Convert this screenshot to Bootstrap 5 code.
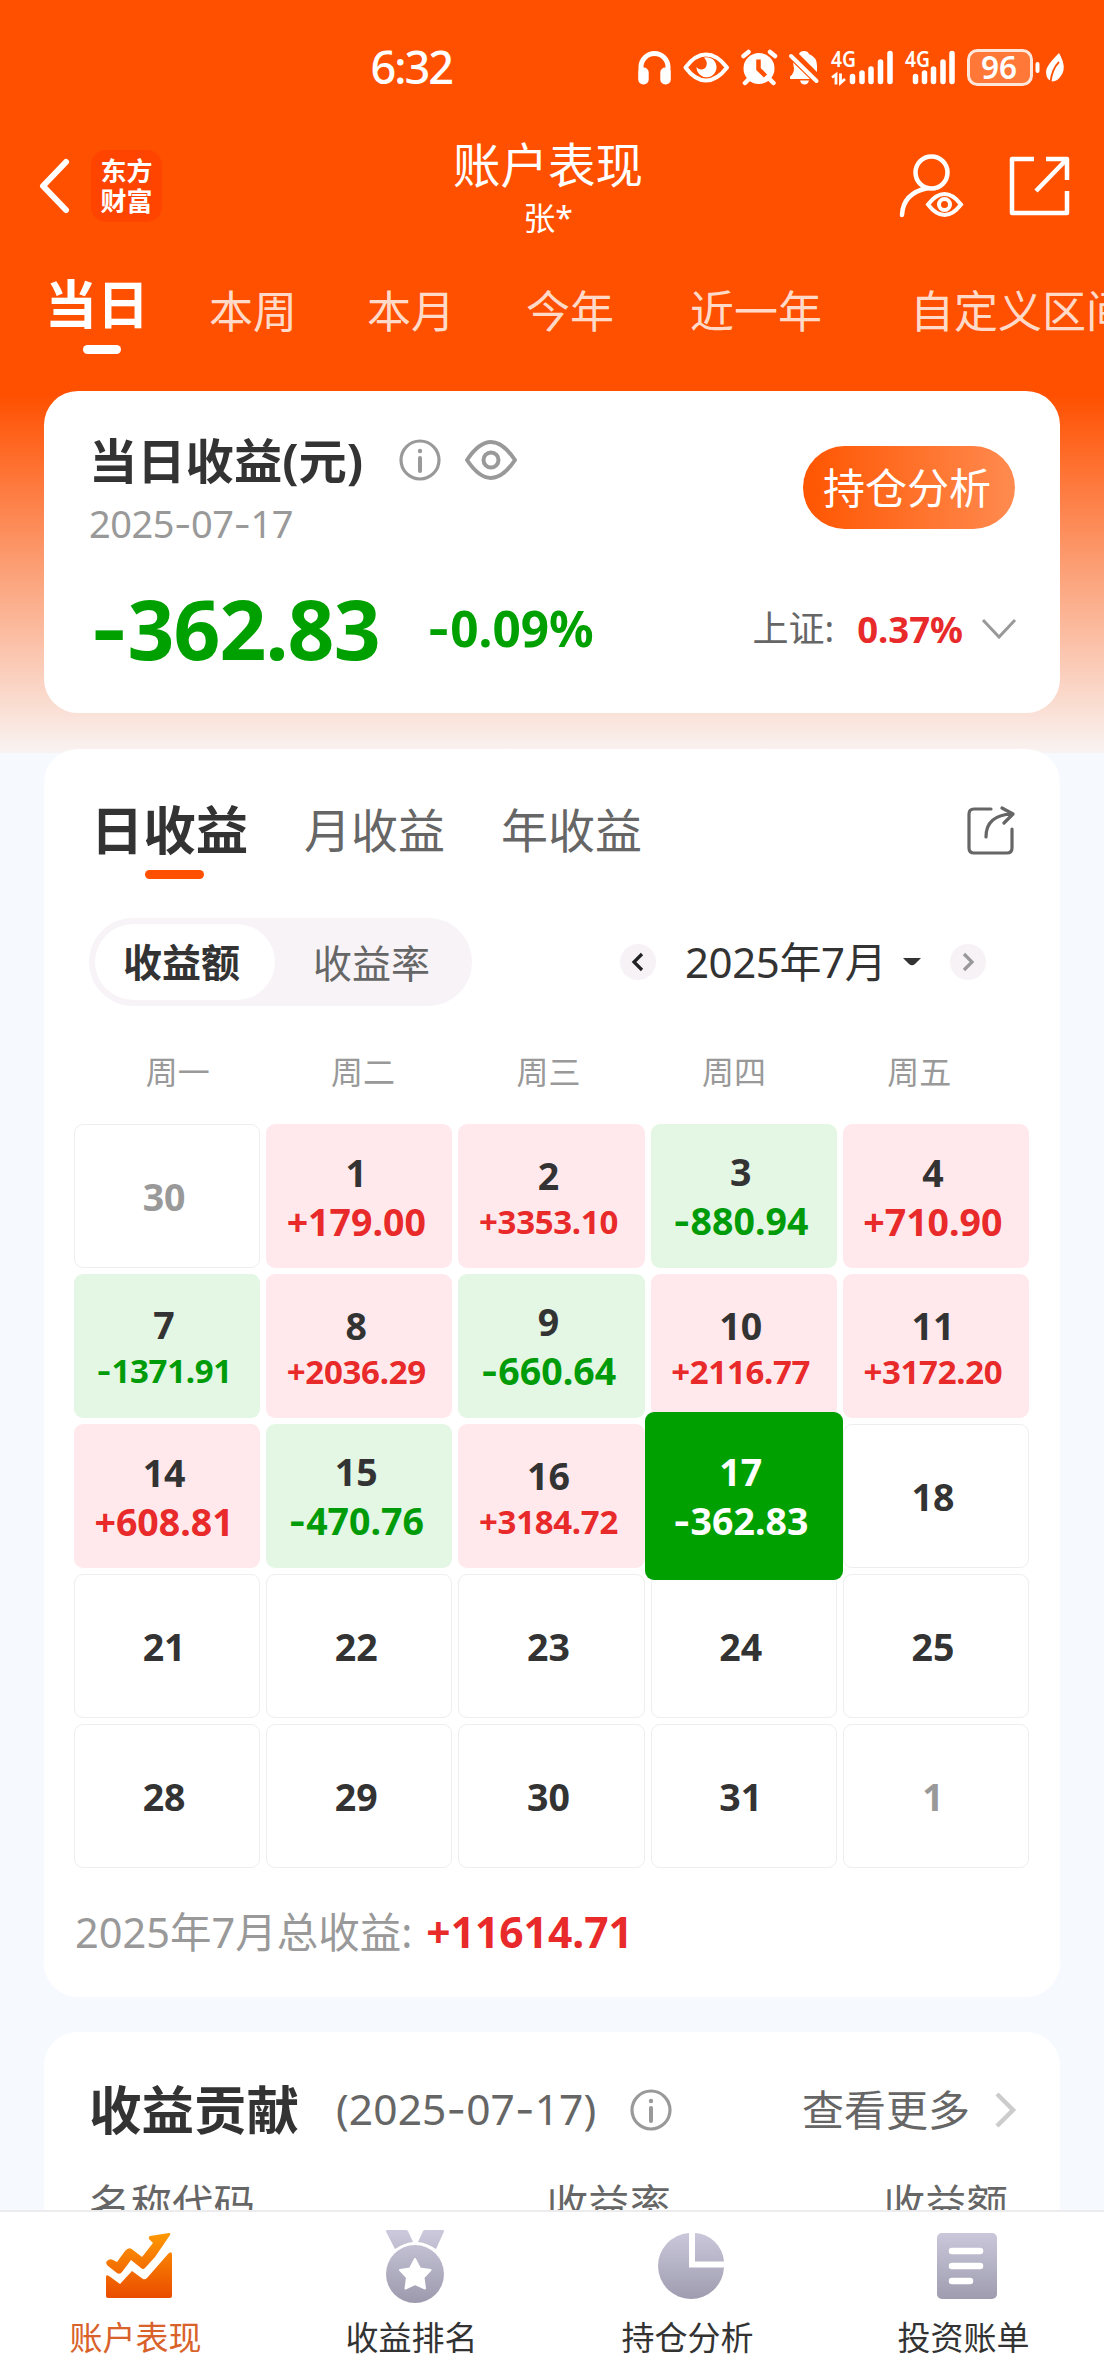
<!DOCTYPE html>
<html lang="zh-CN">
<head>
<meta charset="utf-8">
<meta name="viewport" content="width=device-width, initial-scale=1">
<title>账户表现</title>
<link href="https://cdn.jsdelivr.net/npm/bootstrap@5.3.0/dist/css/bootstrap.min.css" rel="stylesheet">
<style>
  body{width:1104px;height:2376px;overflow:hidden;background:#f6faff;color:#333;font-family:"Noto Sans","Noto Sans CJK SC",sans-serif;line-height:1;white-space:nowrap}
  svg{display:block;flex:none}
  b{font-weight:700}
  .hy{font-style:normal;font-family:Inter,"Noto Sans",sans-serif}
  .screen{height:2210px;background:linear-gradient(#ff5000 0,#ff5000 395px,#f9f3f2 753px,#f6faff 753px)}
  .status{height:136px;padding:0 36px 0 370.5px}
  .clock{font-size:45px;font-weight:500;letter-spacing:-2px;padding-bottom:3px}
  .topbar{height:118px;padding:0 32px 0 38px;display:grid;grid-template-columns:1fr auto 1fr;align-items:start}
  .brand{width:71px;height:72px;border-radius:15px;background:#ff4400;font-size:26px;line-height:30px;font-weight:700;margin-left:19px;padding-top:6px}
  .title{font-size:47.5px;line-height:58px}
  .who{font-size:32px;line-height:48px}
  .periods{height:137px;color:#ffdac8;font-size:44px;line-height:60px;padding-left:45px}
  .periods .now{color:#fff;font-size:52px;font-weight:700}
  .bar{height:9px;border-radius:5px}
  .panel{background:#fff;border-radius:34px;margin:0 44px}
  .summary{height:322px;padding:0 45px 0 46px}
  .grey6{color:#666}.grey9{color:#999}
  .gain{color:#e82a2a}.loss{color:#00a000}
  .btn-hold{width:212px;height:83px;border-radius:42px;background:linear-gradient(90deg,#ff5500,#ff8b50);color:#fff;font-size:42px;line-height:83px;padding:0 4px 0 0;border:0}
  .calendar{height:1248px;margin-top:36px;padding-top:46px}
  .kinds{height:123px;padding:0 45px 0 47px;font-size:47px;line-height:70px}
  .kinds .now{font-size:52.5px;font-weight:700;color:#333}
  .seg{width:383px;height:88px;border-radius:44px;background:#f7f3f7;padding:6px;font-size:39px}
  .seg .on{width:180px;height:76px;border-radius:38px;background:#fff;font-weight:700}
  .dot{width:36px;height:36px;border-radius:50%;background:#f7f2f6}
  .week{height:118px;padding:28px 48px 0 41px;font-size:32px;line-height:76px}
  .days{display:grid;grid-template-columns:repeat(5,1fr);grid-auto-rows:144px;gap:6px;width:955px;margin-left:30px}
  .day{border-radius:9px;display:flex;flex-direction:column;align-items:center;justify-content:center;padding:1px 6px 0 0;font-weight:700;font-size:37.5px;line-height:50px;border:1.5px solid #eee;background:#fff}
  .day.up,.day.dn{border:0}
  .day.up{background:#ffe9ec}.day.up b{color:#e82a2a}
  .day.dn{background:#e4f6e4}.day.dn b{color:#009b08}
  .day b{line-height:48px}
  .day.long{line-height:47px;padding-top:3px}
  .day.long b{font-size:33px;line-height:45px;letter-spacing:-.3px}
  .day.sel{background:#00a000;color:#fff;margin:-12px -6px;z-index:1}
  .day.sel b{color:#fff}
  .total{height:129px;padding-left:31px;font-size:41.5px}
  .contrib{margin-top:35px;height:178px;border-radius:34px 34px 0 0;overflow:hidden}
  .heads{font-size:41.5px;line-height:60px}
  .tabs{height:166px;background:#fff;border-top:2px solid #ececee;font-size:33px}
  .tabs a{color:#333;text-decoration:none}
  .tabs a span{margin-right:5px;line-height:44px}
  .tabs a.here{color:#d9622b}
  .tabs svg{margin:16px 0 10px 2px}
</style>
</head>
<body>
<div class="screen overflow-hidden">
  <div class="status d-flex align-items-center justify-content-between text-white">
    <span class="clock">6:32</span>
    <svg width="430" height="40" viewBox="638 48 430 40" fill="#fff">
      <path d="M641 72V67a13.500 13.500 0 0 1 27 0V72" fill="none" stroke="#fff" stroke-width="5"/>
      <rect x="638.200" y="67.500" width="10.500" height="17" rx="5"/><rect x="660.300" y="67.500" width="10.500" height="17" rx="5"/>
      <path d="M685.500 67.500Q695 54.500 706 54.500T727 67.500Q717 80.500 706 80.500T685.500 67.500Z" fill="none" stroke="#fff" stroke-width="4" stroke-linejoin="round"/>
      <path d="M704 57.500a10 10 0 1 1-7.500 9.500c3 4 9 3 10-1.500 1-3-.5-6-2.500-8z"/>
      <circle cx="759" cy="68.500" r="15.500"/>
      <path d="M743.500 56l5-4M775 56l-5-4M749 79l-4 4M769.500 79l4 4" stroke="#fff" stroke-width="4.500" stroke-linecap="round"/>
      <path d="M758.500 59.500v9.500l7 7" fill="none" stroke="#ff5000" stroke-width="4.500"/>
      <path d="M799 54q1-3 5-3t5 3q8 3 8 12v6zM793 62.500L810 79H790v-2.500q4-3 4-8zM800 80.500h9q-1 4-4.500 4T800 80.500z"/>
      <path d="M791 56L816.500 81" stroke="#fff" stroke-width="4" stroke-linecap="round"/>
      <text x="831" y="66.500" font-size="22" font-weight="600" textLength="25" lengthAdjust="spacingAndGlyphs">4G</text>
      <path d="M832 77.500l4-3V84.500M840.500 73.500V83l4.500-4" fill="none" stroke="#fff" stroke-width="2.800"/>
      <path d="M852.500 76.500v5M862 73v8.500M871 69v12.500M880.500 62v19.500M890 53.500v28" stroke="#fff" stroke-width="5.500" stroke-linecap="round"/>
      <text x="905" y="66.500" font-size="22" font-weight="600" textLength="25" lengthAdjust="spacingAndGlyphs">4G</text>
      <path d="M915.500 76.500v5M924.500 73v8.500M933.500 69v12.500M943 62v19.500M952 53.500v28" stroke="#fff" stroke-width="5.500" stroke-linecap="round"/>
      <rect x="968.500" y="50.500" width="63" height="34" rx="9" fill="#ff7838" stroke="#ffe6da" stroke-width="3"/>
      <text x="981" y="79" font-size="32" font-weight="600" textLength="36" lengthAdjust="spacingAndGlyphs">96</text>
      <rect x="1035.500" y="62" width="4" height="11" rx="2"/>
      <path d="M1059 53q8 14 2.500 22-4 6.500-9 6.500-2.500-1-4.500-2.500-4-7 0-13 3-5 11-13z"/>
      <path d="M1059 62q-7 7-8.500 20" fill="none" stroke="#ff5000" stroke-width="1.800"/>
    </svg>
  </div>
  <header class="topbar text-white">
    <div class="d-flex align-items-center" style="padding-top:14px">
      <svg width="34" height="56" viewBox="0 0 34 56" fill="none" stroke="#fff" stroke-width="6" stroke-linecap="round" stroke-linejoin="round"><path d="M28 4L5 28 28 52"/></svg>
      <div class="brand text-center">东方<br>财富</div>
    </div>
    <div class="text-center" style="padding-right:14px">
      <div class="title">账户表现</div>
      <div class="who">张*</div>
    </div>
    <div class="d-flex justify-content-end" style="padding-top:16px">
      <svg width="66" height="68" viewBox="899 152 66 68" fill="none" stroke="#fff" stroke-width="4.500" stroke-linecap="round"><circle cx="931.500" cy="172.500" r="16"/><path d="M902 215q1-22 26-27"/><path d="M928 204.500Q936 194 944.500 194T961 204.500Q953 215 944.500 215T928 204.500Z" stroke-width="4"/><circle cx="944.500" cy="204.500" r="5.500" stroke-width="4"/></svg>
      <svg style="margin-left:43px" width="64" height="68" viewBox="1008 152 64 68" fill="none" stroke="#fff" stroke-width="4.500" stroke-linejoin="round"><path d="M1034 159h-22v54h55v-22M1046 159h21v21M1067 159l-31 32"/></svg>
    </div>
  </header>
  <nav class="periods d-flex">
    <div class="now d-flex flex-column align-items-center" style="width:104px;padding-top:20px"><span>当日</span><i class="bar bg-white" style="width:38px;margin:11px 0 0 10px"></i></div>
    <span style="padding:27px 0 0 60px">本周</span>
    <span style="padding:27px 0 0 70px">本月</span>
    <span style="padding:27px 0 0 71px">今年</span>
    <span style="padding:27px 0 0 76px">近一年</span>
    <span style="padding:27px 0 0 88px">自定义区间</span>
  </nav>

  <section class="panel summary">
    <div class="d-flex justify-content-between" style="padding-top:38px">
      <div>
        <div class="d-flex align-items-center" style="height:62px">
          <span class="fw-bold" style="font-size:48.300px;line-height:62px;width:309.500px;margin-left:-1px">当日收益(元)</span>
          <svg width="42" height="42" viewBox="0 0 42 42" fill="none" stroke="#999" stroke-width="3.200"><circle cx="21" cy="21" r="19"/><path d="M21 19v13" stroke-width="4" stroke-linecap="round"/><circle cx="21" cy="12" r="2.200" fill="#999" stroke="none"/></svg>
          <svg style="margin-left:23px" width="54" height="42" viewBox="0 0 54 42" fill="none" stroke="#999" stroke-width="4" stroke-linejoin="round"><path d="M3 21Q15 3 27 3T51 21Q39 39 27 39T3 21Z"/><circle cx="27" cy="21" r="7.500"/></svg>
        </div>
        <div class="grey9" style="font-size:38px;line-height:64px;letter-spacing:-.5px;margin-left:-1px">2025<i class="hy">-</i>07<i class="hy">-</i>17</div>
      </div>
      <button class="btn-hold" style="margin-top:17px">持仓分析</button>
    </div>
    <div class="d-flex align-items-center" style="height:106px;margin-top:20px">
      <span class="loss fw-bold" style="font-size:82px;letter-spacing:-.9px;width:337px"><i class="hy">-</i>362.83</span>
      <span class="loss fw-bold" style="font-size:49.500px"><i class="hy">-</i>0.09%</span>
      <span class="ms-auto grey6" style="font-size:36px">上证:</span>
      <span class="gain fw-bold" style="font-size:36.500px;margin-left:23px">0.37%</span>
      <svg style="margin:0 -2px 0 18px" width="36" height="24" viewBox="0 0 36 24" fill="none" stroke="#999" stroke-width="3"><path d="M2 3l16 17L34 3"/></svg>
    </div>
  </section>

  <section class="panel calendar">
    <div class="kinds d-flex grey6">
      <div class="now d-flex flex-column align-items-center" style="width:157px"><span>日收益</span><i class="bar" style="width:59px;background:#ff5000;margin:5px 0 0 9px"></i></div>
      <span style="margin-left:56px">月收益</span>
      <span style="margin-left:56px">年收益</span>
      <svg class="ms-auto" style="margin-top:10px" width="50" height="52" viewBox="966 805 50 52" fill="none" stroke="#666" stroke-width="3.200" stroke-linecap="round" stroke-linejoin="round"><path d="M992 809h-17q-5 0-5 5v34q0 5 5 5h33q5 0 5-5v-19M987 837q0-22 26-23M1003 808l11 6-9 9"/></svg>
    </div>
    <div class="d-flex align-items-center" style="padding-left:45px">
      <div class="seg d-flex align-items-center">
        <span class="on d-flex align-items-center justify-content-center" style="padding:0 7px 1px 0">收益额</span>
        <span class="grey6" style="margin-left:38px">收益率</span>
      </div>
      <span class="dot d-flex align-items-center justify-content-center" style="margin-left:148px"><svg width="14" height="22" viewBox="0 0 14 22" fill="none" stroke="#222" stroke-width="3.200"><path d="M11 3L3 11l8 8"/></svg></span>
      <span style="font-size:42px;margin-left:29px;letter-spacing:-.4px">2025年7月</span>
      <svg style="margin-left:16px" width="20" height="10" viewBox="0 0 20 10"><path d="M1 1h18l-6 6q-3 2.500-6 0z" fill="#333"/></svg>
      <span class="dot d-flex align-items-center justify-content-center" style="margin-left:28px"><svg width="14" height="22" viewBox="0 0 14 22" fill="none" stroke="#999" stroke-width="3.200"><path d="M3 3l8 8-8 8"/></svg></span>
    </div>
    <div class="week row g-0 text-center grey9">
      <div class="col">周一</div><div class="col">周二</div><div class="col">周三</div><div class="col">周四</div><div class="col">周五</div>
    </div>
    <div class="days">
      <div class="day grey9">30</div>
      <div class="day up">1<b>+179.00</b></div>
      <div class="day up long">2<b>+3353.10</b></div>
      <div class="day dn">3<b><i class="hy">-</i>880.94</b></div>
      <div class="day up">4<b>+710.90</b></div>
      <div class="day dn long">7<b><i class="hy">-</i>1371.91</b></div>
      <div class="day up long">8<b>+2036.29</b></div>
      <div class="day dn">9<b><i class="hy">-</i>660.64</b></div>
      <div class="day up long">10<b>+2116.77</b></div>
      <div class="day up long">11<b>+3172.20</b></div>
      <div class="day up">14<b>+608.81</b></div>
      <div class="day dn">15<b><i class="hy">-</i>470.76</b></div>
      <div class="day up long">16<b>+3184.72</b></div>
      <div class="day dn sel">17<b><i class="hy">-</i>362.83</b></div>
      <div class="day">18</div>
      <div class="day">21</div><div class="day">22</div><div class="day">23</div><div class="day">24</div><div class="day">25</div>
      <div class="day">28</div><div class="day">29</div><div class="day">30</div><div class="day">31</div><div class="day grey9">1</div>
    </div>
    <div class="total d-flex align-items-center grey9"><span>2025年7月总收益:</span><b class="gain" style="margin-left:14px;font-size:42.500px">+11614.71</b></div>
  </section>

  <section class="panel contrib">
    <div class="d-flex align-items-center" style="padding:42px 42px 0 45px;height:114px">
      <span class="fw-bold" style="font-size:52.500px;width:247px">收益贡献</span>
      <span class="grey6" style="font-size:42.500px;letter-spacing:.1px;width:294px">(2025<i class="hy">-</i>07<i class="hy">-</i>17)</span>
      <svg width="42" height="42" viewBox="0 0 42 42" fill="none" stroke="#999" stroke-width="3.200"><circle cx="21" cy="21" r="19"/><path d="M21 19v13" stroke-width="4" stroke-linecap="round"/><circle cx="21" cy="12" r="2.200" fill="#999" stroke="none"/></svg>
      <span class="grey6 ms-auto" style="font-size:42px">查看更多</span>
      <svg style="margin-left:24px" width="24" height="38" viewBox="0 0 24 38" fill="none" stroke="#ccc" stroke-width="4.500"><path d="M3 3l16 16L3 35"/></svg>
    </div>
    <div class="heads d-flex justify-content-between grey6" style="padding:28px 52px 0 45px"><span>名称代码</span><span style="margin-left:79px">收益率</span><span>收益额</span></div>
  </section>
</div>

<nav class="tabs row g-0 text-center">
  <a class="col d-flex flex-column align-items-center here" href="#">
    <svg width="70" height="78" viewBox="0 0 70 78" fill="url(#warm)"><defs>
      <linearGradient id="warm" gradientUnits="userSpaceOnUse" x1="0" y1="4" x2="0" y2="70"><stop offset="0" stop-color="#ff9a00"/><stop offset="1" stop-color="#ea4c00"/></linearGradient>
      <linearGradient id="cool" gradientUnits="userSpaceOnUse" x1="0" y1="4" x2="0" y2="74"><stop offset="0" stop-color="#cac8da"/><stop offset="1" stop-color="#9d9aae"/></linearGradient>
      </defs><path d="M2 49q0-3 3-1l11 8 12-13 11 8q2 1 4-1L64 26q4-4 4 1v41q0 2-2 2H4q-2 0-2-2z"/><path d="M46 8l19-3q2 0 1 2L51 29 41 40q-2 2-4 0l-10-8-9 12q-2 3-5 1L4 38q-3-3-1-5 3-3 6-1l4 2 8-11q4-5 8-1l9 7 11-14-4-4q-1-2 1-3z"/></svg>
    <span>账户表现</span></a>
  <a class="col d-flex flex-column align-items-center" href="#">
    <svg width="70" height="78" viewBox="0 0 70 78" fill="url(#cool)"><path d="M7 2h19q1 0 2 1l5 11q-9 1-18 7L6 3.500q0-1.500 1-1.500zM63 2H45q-1 0-2 1l-5 11q9 1 18 7l8-17.500q0-1.500-1-1.500z"/><circle cx="35" cy="46" r="29"/><path d="M35 31l5 9.500 10.500 1.500-7 7.500 1.500 11L35 56l-9.500 4.500 1.500-11-7-7.500L30 40.500z" fill="#fff" stroke="#fff" stroke-width="2" stroke-linejoin="round"/></svg>
    <span>收益排名</span></a>
  <a class="col d-flex flex-column align-items-center" href="#">
    <svg width="70" height="78" viewBox="0 0 70 78" fill="url(#cool)"><path d="M33 5v34.500h35A33 33 0 1 1 33 5z"/><path d="M39 5v28.500h29A31 31 0 0 0 39 5z"/></svg>
    <span>持仓分析</span></a>
  <a class="col d-flex flex-column align-items-center" href="#">
    <svg width="70" height="78" viewBox="0 0 70 78" fill="url(#cool)"><rect x="5" y="5" width="60" height="66" rx="5"/><path d="M20 23h28M20 38h28M20 53h18" stroke="#fff" stroke-width="6.500" stroke-linecap="round"/></svg>
    <span>投资账单</span></a>
</nav>
<script src="https://cdn.jsdelivr.net/npm/bootstrap@5.3.0/dist/js/bootstrap.bundle.min.js"></script>
</body>
</html>
